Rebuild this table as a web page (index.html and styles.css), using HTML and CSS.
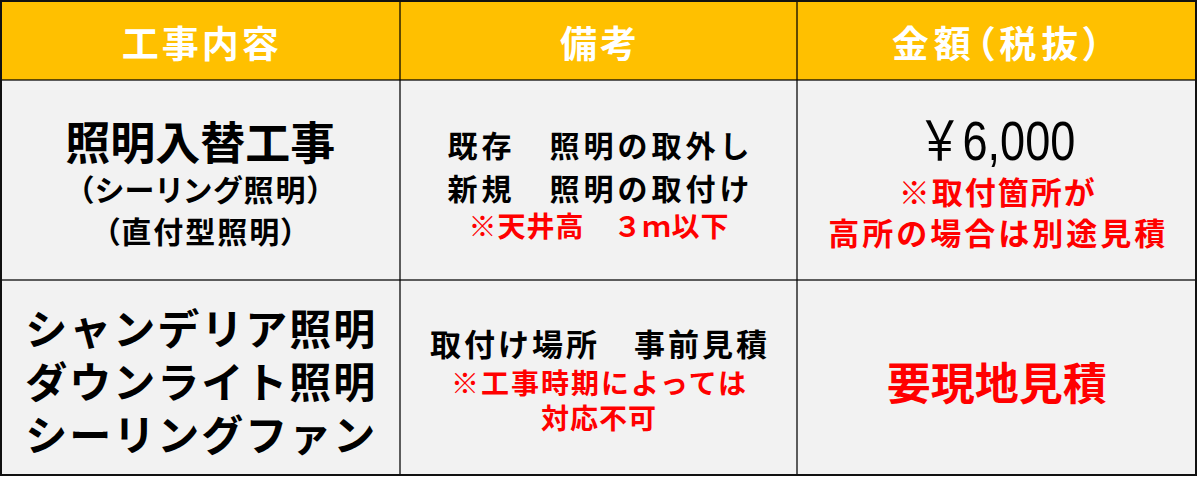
FILE: index.html
```html
<!DOCTYPE html>
<html lang="ja">
<head>
<meta charset="utf-8">
<title>工事内容・金額</title>
<link rel="stylesheet" href="styles.css">
</head>
<body>
<div class="frame">
  <table class="quote">
    <colgroup><col class="c"><col class="c"><col class="c"></colgroup>
    <thead>
      <tr class="head">
        <th><span class="h">工事内容</span></th>
        <th><span class="h">備考</span></th>
        <th><span class="h h-paren">金額（税抜）</span></th>
      </tr>
    </thead>
    <tbody>
      <tr class="r1">
        <td class="cell-a1">
          <div class="t-big">照明入替工事</div>
          <div class="t-sub l2">（シーリング照明）</div>
          <div class="t-sub l3">（直付型照明）</div>
        </td>
        <td class="cell-b1">
          <div class="t-note n1">既存　照明の取外し</div>
          <div class="t-note n2">新規　照明の取付け</div>
          <div class="t-red r3">※天井高　３ｍ以下</div>
        </td>
        <td class="cell-c1">
          <div class="price"><span class="price-in">￥6,000</span></div>
          <div class="t-red2 p2">※取付箇所が</div>
          <div class="t-red2 p3">高所の場合は別途見積</div>
        </td>
      </tr>
      <tr class="r2">
        <td class="cell-a2">
          <div class="t-list">シャンデリア照明</div>
          <div class="t-list">ダウンライト照明</div>
          <div class="t-list">シーリングファン</div>
        </td>
        <td class="cell-b2">
          <div class="t-note2">取付け場所　事前見積</div>
          <div class="t-red q2">※工事時期によっては</div>
          <div class="t-red q3">対応不可</div>
        </td>
        <td class="cell-c2">
          <div class="t-big-red">要現地見積</div>
        </td>
      </tr>
    </tbody>
  </table>
</div>
</body>
</html>
```
FILE: styles.css
```css
html, body {
  margin: 0;
  padding: 0;
  background: #ffffff;
}

body {
  font-family: "Noto Sans CJK JP", "Noto Sans", sans-serif;
  color: #000000;
}

.frame {
  width: 1197px;
  height: 476px;
  box-sizing: border-box;
  border: 2px solid #111111;
  background: #f2f2f2;
}

.quote {
  width: 100%;
  height: 100%;
  border-collapse: collapse;
  border-style: hidden;
  table-layout: fixed;
}

.quote .c {
  width: 33.333%;
}

.quote th,
.quote td {
  border: 2px solid rgba(0, 0, 0, 0.62);
  padding: 0;
  text-align: center;
  vertical-align: middle;
}

.head th {
  height: 77px;
  background: #ffc000;
  color: #ffffff;
  font-weight: 700;
}

.h {
  display: inline-block;
  font-size: 37px;
  line-height: 44px;
  letter-spacing: 3px;
  padding-left: 3px;
  padding-top: 2px;
}

.h-paren {
  font-feature-settings: "palt";
  letter-spacing: 5px;
  padding-left: 5px;
}

.r1 td {
  height: 192px;
  background: #f2f2f2;
}

.r2 td {
  background: #f2f2f2;
}

/* row 1, column 1 */
.cell-a1 {
  padding-top: 6px !important;
}

.t-big {
  font-size: 45px;
  line-height: 50px;
  font-weight: 700;
}

.t-sub {
  font-size: 30px;
  font-weight: 700;
  letter-spacing: 2px;
  padding-left: 2px;
  font-feature-settings: "palt";
}

.l2 { line-height: 44px; }
.l3 { line-height: 40px; }

/* row 1, column 2 */
.cell-b1 {
  padding-top: 4px !important;
}

.t-note {
  font-size: 30px;
  font-weight: 700;
  letter-spacing: 4px;
  padding-left: 4px;
}

.n1 { line-height: 46px; }
.n2 { line-height: 40px; }

.t-red {
  font-size: 28px;
  font-weight: 700;
  color: #ff0000;
  letter-spacing: 1px;
  padding-left: 1px;
}

.r3 { line-height: 36px; }

/* row 1, column 3 */
.cell-c1 {
  padding-top: 4px !important;
}

.price {
  line-height: 58px;
  font-size: 55px;
  font-family: "Liberation Sans", "Noto Sans CJK JP", sans-serif;
}

.price-in {
  display: inline-block;
  transform: scaleX(0.82);
}

.t-red2 {
  font-size: 31px;
  font-weight: 700;
  color: #ff0000;
  letter-spacing: 3px;
  padding-left: 3px;
}

.p2 { line-height: 42px; letter-spacing: 2px; padding-left: 2px; }
.p3 { line-height: 40px; }

/* row 2, column 1 */
.cell-a2 {
  padding-top: 4px !important;
}

.t-list {
  font-size: 42px;
  line-height: 53px;
  font-weight: 700;
  letter-spacing: 2px;
  padding-left: 2px;
}

/* row 2, column 2 */
.t-note2 {
  font-size: 31px;
  line-height: 42px;
  font-weight: 700;
  letter-spacing: 3px;
  padding-left: 3px;
}

.q2 { line-height: 36px; letter-spacing: 2px; padding-left: 2px; }
.q3 { line-height: 34px; }

/* row 2, column 3 */
.cell-c2 {
  padding-top: 6px !important;
}

.t-big-red {
  font-size: 44px;
  line-height: 50px;
  font-weight: 700;
  color: #ff0000;
}
```
